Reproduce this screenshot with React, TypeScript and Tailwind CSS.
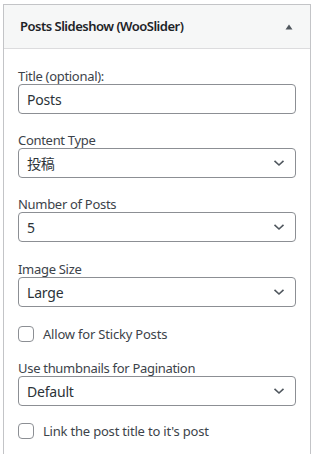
import React from "react";

const font = { fontFamily: '"Noto Sans", "Noto Sans CJK JP", sans-serif' };

function Chevron() {
  return (
    <svg width="12" height="8" viewBox="0 0 12 8" className="absolute right-[10px] top-1/2 -translate-y-1/2">
      <path d="M1.5 1.8 L6 6 L10.5 1.8" fill="none" stroke="#50575e" strokeWidth="1.6" />
    </svg>
  );
}

function Label({ children }: { children: React.ReactNode }) {
  return <div className="text-[13px] leading-[16px] tracking-[-0.3px] text-[#3c434a]">{children}</div>;
}

function Select({ value }: { value: string }) {
  return (
    <div className="relative h-[30px] rounded-[4px] border border-[#8c8f94] bg-white pl-[8px] flex items-center text-[14px] tracking-[-0.2px] text-[#2c3338]">
      {value}
      <Chevron />
    </div>
  );
}

function Checkbox({ label }: { label: string }) {
  return (
    <div className="flex items-center h-[16px]">
      <div className="h-[16px] w-[16px] rounded-[4px] border border-[#8c8f94] bg-white" />
      <span className="ml-[9px] text-[13px] leading-[16px] tracking-[-0.2px] text-[#3c434a]">{label}</span>
    </div>
  );
}

export default function App() {
  return (
    <div className="w-[313px] h-[454px] bg-white pt-[4px] pl-[3px] overflow-hidden" style={font}>
      <div className="w-[308px] border border-[#c3c4c7] border-b-0 h-[460px]">
        <div className="h-[44px] bg-[#f6f7f7] border-b border-[#dcdcde] flex items-center justify-between pl-[16px] pr-[17px]">
          <span className="text-[13px] font-semibold tracking-[-0.5px] text-[#1d2327]">Posts Slideshow (WooSlider)</span>
          <svg width="8" height="6" viewBox="0 0 8 6">
            <path d="M4 0.5 L7.5 5.5 L0.5 5.5 Z" fill="#50575e" />
          </svg>
        </div>
        <div className="px-[14px] pt-[19px]">
          <Label>Title (optional):</Label>
          <div className="h-[30px] rounded-[4px] border border-[#8c8f94] bg-white pl-[8px] flex items-center text-[14px] tracking-[-0.2px] text-[#2c3338]">
            Posts
          </div>
          <div className="mt-[18px]">
            <Label>Content Type</Label>
            <Select value="投稿" />
          </div>
          <div className="mt-[18px]">
            <Label>Number of Posts</Label>
            <Select value="5" />
          </div>
          <div className="mt-[19px]">
            <Label>Image Size</Label>
            <Select value="Large" />
          </div>
          <div className="mt-[19px]">
            <Checkbox label="Allow for Sticky Posts" />
          </div>
          <div className="mt-[18px]">
            <Label>Use thumbnails for Pagination</Label>
            <Select value="Default" />
          </div>
          <div className="mt-[17px]">
            <Checkbox label="Link the post title to it's post" />
          </div>
        </div>
      </div>
    </div>
  );
}
